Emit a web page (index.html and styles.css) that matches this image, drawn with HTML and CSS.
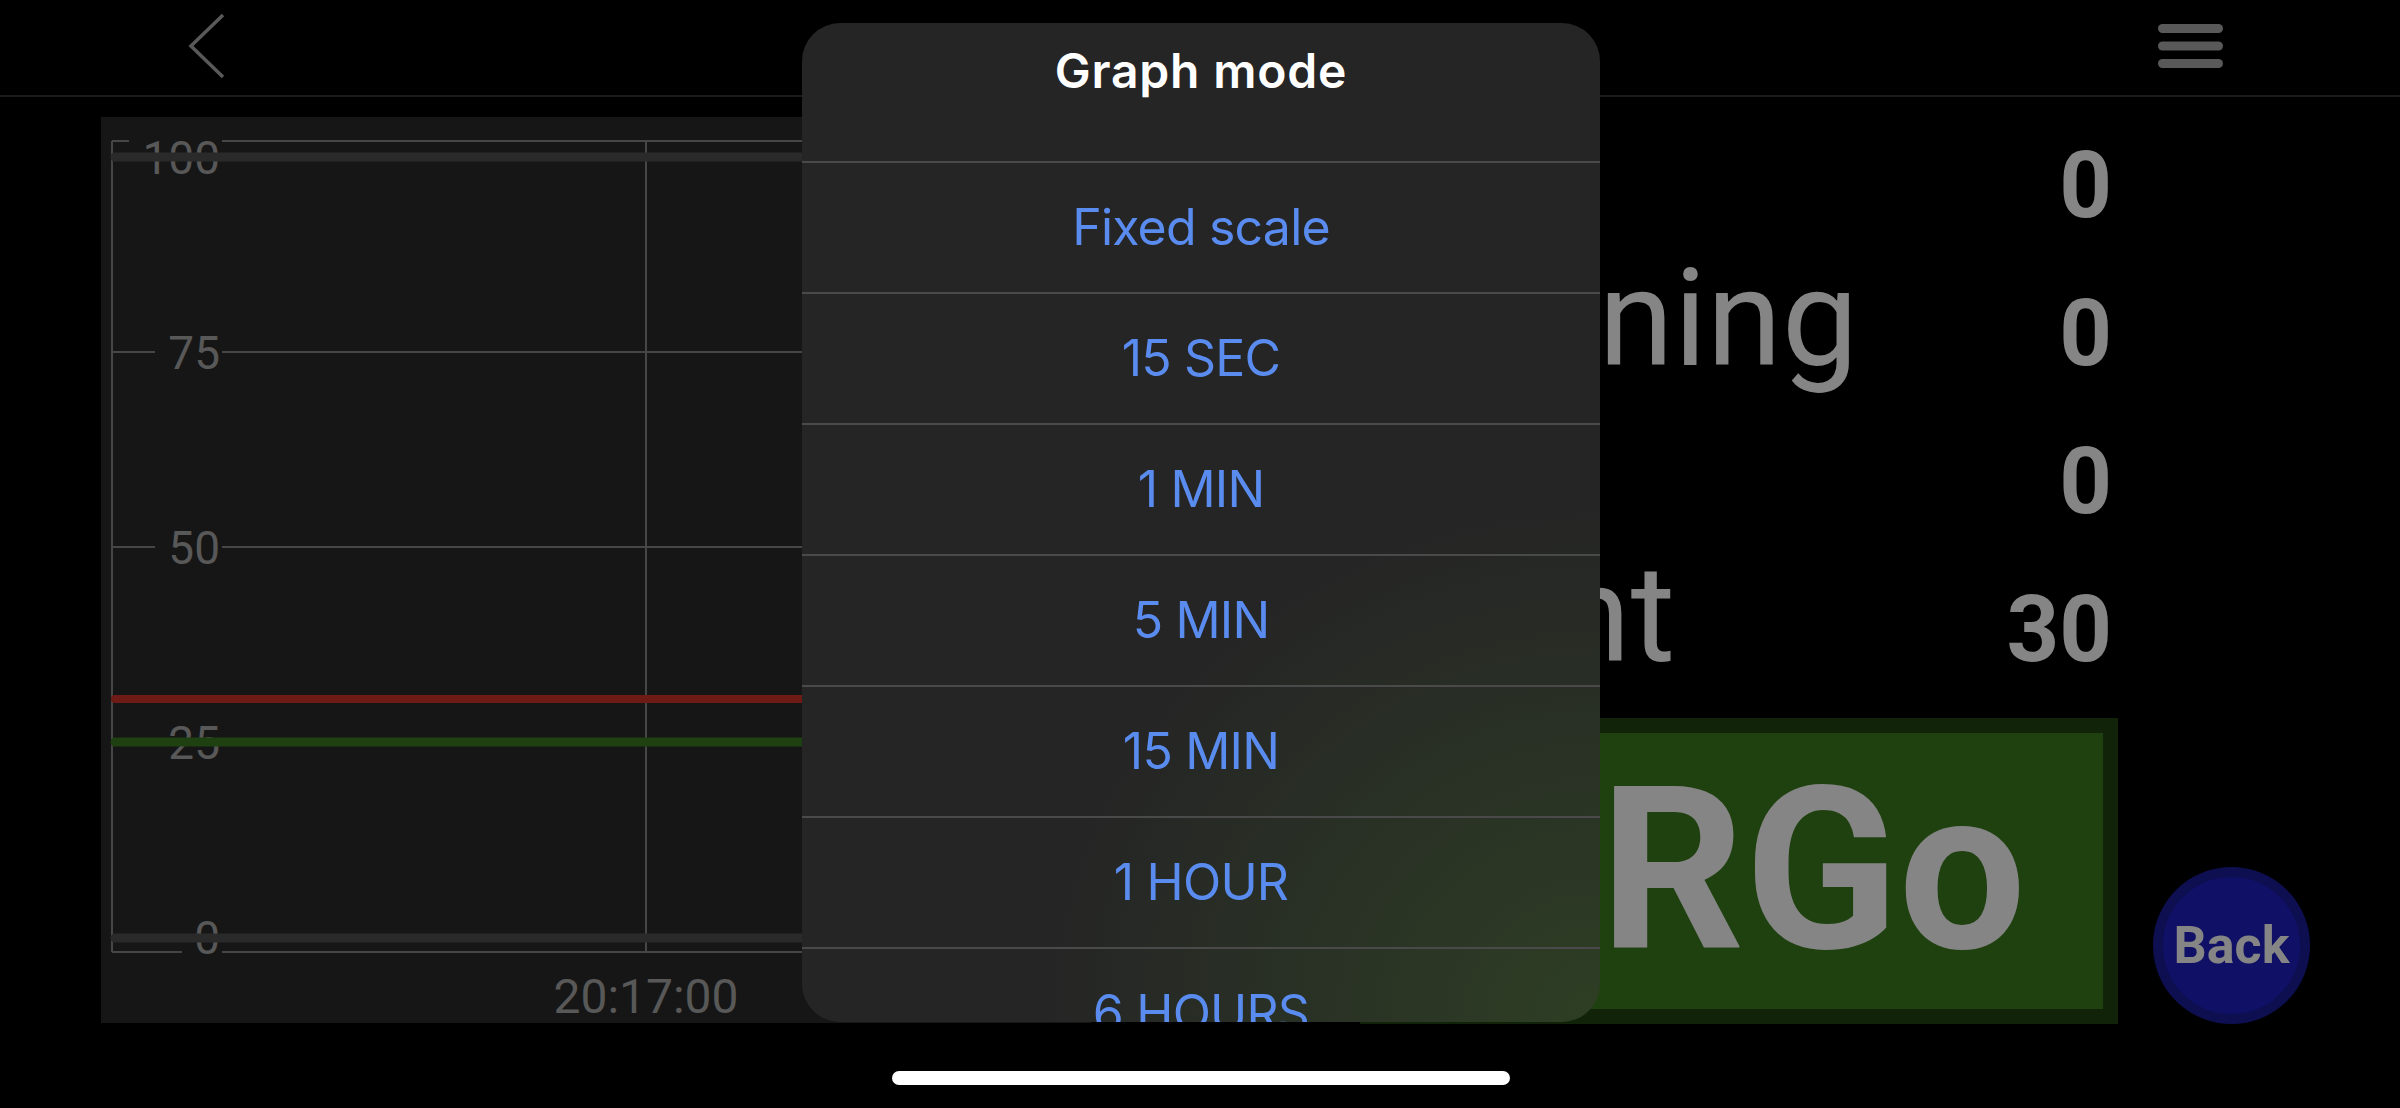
FILE: index.html
```html
<!DOCTYPE html>
<html lang="en">

<head>
    <meta charset="UTF-8">
    <meta name="viewport" content="width=device-width, initial-scale=1.0">
    <title>Counter</title>
    <link rel="stylesheet" href="styles.css">
</head>

<body>
    <div class="screen">
        <header class="topbar">
            <svg class="icon-back" width="38" height="66" viewBox="0 0 38 66">
                <path d="M35 2 L3 33 L35 64" fill="none" stroke="#595959" stroke-width="3.5" />
            </svg>
            <svg class="icon-menu" width="65" height="45" viewBox="0 0 65 45">
                <rect x="0" y="0" width="65" height="9" rx="4.5" fill="#595959" />
                <rect x="0" y="17.5" width="65" height="9" rx="4.5" fill="#595959" />
                <rect x="0" y="35" width="65" height="9" rx="4.5" fill="#595959" />
            </svg>
        </header>

        <main class="content">
            <!-- chart, drawn in its own pixel space -->
            <section class="chart">
                <svg width="990" height="860" viewBox="0 0 990 860">
                    <g stroke="#464646" stroke-width="2" fill="none">
                        <path d="M11 24 H990 M11 24 V835 M11 835 H990" />
                        <path d="M545 24 V835" />
                        <path d="M11 235 H990 M11 430 H990 M11 626 H990" />
                    </g>
                    <g fill="#161616">
                        <rect x="28" y="20" width="93" height="40" />
                        <rect x="54" y="215" width="67" height="40" />
                        <rect x="54" y="410" width="67" height="40" />
                        <rect x="54" y="606" width="67" height="40" />
                        <rect x="81" y="801" width="40" height="40" />
                    </g>
                    <g class="axis-text" text-anchor="end">
                        <text x="119" y="57">100</text>
                        <text x="119" y="252">75</text>
                        <text x="119" y="447">50</text>
                        <text x="119" y="642">25</text>
                        <text x="119" y="837">0</text>
                    </g>
                    <g fill="none" stroke-linecap="round">
                        <path d="M14 40 H990" stroke="#2a2a2a" stroke-width="9" />
                        <path d="M14 821 H990" stroke="#2a2a2a" stroke-width="9" />
                        <path d="M14 582 H990" stroke="#6e1a15" stroke-width="8" />
                        <path d="M14 625 H990" stroke="#1f4010" stroke-width="9" />
                    </g>
                </svg>
                <div class="time-label">20:17:00</div>
            </section>

            <section class="stats">
                <div class="stat-row">
                    <span class="stat-label">Set</span>
                    <span class="stat-value">0</span>
                </div>
                <div class="stat-row">
                    <span class="stat-label">Warning</span>
                    <span class="stat-value">0</span>
                </div>
                <div class="stat-row">
                    <span class="stat-label">Left</span>
                    <span class="stat-value">0</span>
                </div>
                <div class="stat-row">
                    <span class="stat-label">Point</span>
                    <span class="stat-value">30</span>
                </div>
                <div class="go-row">
                    <div class="go-box">CRGo</div>
                    <button class="back-btn">Back</button>
                </div>
            </section>
        </main>

        <!-- action sheet over the page -->
        <div class="sheet">
            <div class="sheet-title">Graph mode</div>
            <div class="sheet-item">Fixed scale</div>
            <div class="sheet-item">15 SEC</div>
            <div class="sheet-item">1 MIN</div>
            <div class="sheet-item">5 MIN</div>
            <div class="sheet-item">15 MIN</div>
            <div class="sheet-item">1 HOUR</div>
            <div class="sheet-item">6 HOURS</div>
        </div>

        <div class="home-bar"></div>
    </div>
</body>

</html>
```

FILE: styles.css
```css
body {
    margin: 0;
    padding: 0;
    background-color: #000;
    font-family: Roboto, "Liberation Sans", sans-serif;
    overflow: hidden;
}

.screen {
    position: relative;
    width: 2400px;
    height: 1108px;
    overflow: hidden;
}

.topbar {
    display: flex;
    justify-content: space-between;
    align-items: flex-start;
    height: 95px;
    padding: 0 177px 0 188px;
    border-bottom: 2px solid #1b1b1b;
}

.icon-back {
    margin-top: 13px;
}

.icon-menu {
    margin-top: 24px;
}

.content {
    display: flex;
    align-items: flex-start;
}

.chart {
    margin-top: 20px;
    margin-left: 101px;
    width: 990px;
    height: 906px;
    background-color: #161616;
}

.chart svg {
    display: block;
}

.axis-text {
    font-family: Roboto, sans-serif;
    font-size: 46px;
    fill: #585858;
}

.time-label {
    width: 1090px;
    height: 40px;
    line-height: 40px;
    text-align: center;
    font-size: 48px;
    color: #585858;
}

.stats {
    margin-left: 269px;
}

.stat-row {
    display: flex;
    justify-content: space-between;
    align-items: baseline;
    width: 752px;
    height: 148px;
    line-height: 148px;
    color: #858585;
}

.stat-label {
    font-size: 136px;
}

.stat-value {
    font-size: 92px;
    font-weight: bold;
}

.go-row {
    display: flex;
    align-items: flex-end;
    margin-top: 29px;
}

.go-box {
    display: flex;
    justify-content: center;
    align-items: center;
    box-sizing: border-box;
    width: 758px;
    height: 306px;
    border: 15px solid #11240a;
    background-color: #1f410f;
    color: #858585;
    font-size: 226px;
    font-weight: bold;
    line-height: 1;
}

.back-btn {
    box-sizing: border-box;
    width: 157px;
    height: 157px;
    margin-left: 35px;
    border-radius: 50%;
    border: 10px solid #0e0f50;
    background-color: #101066;
    color: #858585;
    font-family: Roboto, sans-serif;
    font-size: 52px;
    font-weight: bold;
    padding: 0;
}

.sheet {
    position: absolute;
    left: 802px;
    top: 23px;
    width: 798px;
    height: 999px;
    border-radius: 38px;
    overflow: hidden;
    background: radial-gradient(ellipse 560px 520px at 100% 100%, rgba(52, 80, 36, 0.6), rgba(37, 37, 37, 0) 100%), #252525;
    font-family: Inter, "Noto Sans", sans-serif;
    text-align: center;
}

.sheet-title {
    height: 138px;
    line-height: 96px;
    color: #fff;
    font-size: 48px;
    font-weight: 600;
    letter-spacing: 0.8px;
}

.sheet-item {
    height: 129px;
    line-height: 129px;
    border-top: 2px solid #4a4a4a;
    color: #5a8cf0;
    font-size: 50px;
    letter-spacing: -0.8px;
}

.home-bar {
    position: absolute;
    left: 892px;
    top: 1071px;
    width: 618px;
    height: 14px;
    border-radius: 7px;
    background-color: #fff;
}
```
